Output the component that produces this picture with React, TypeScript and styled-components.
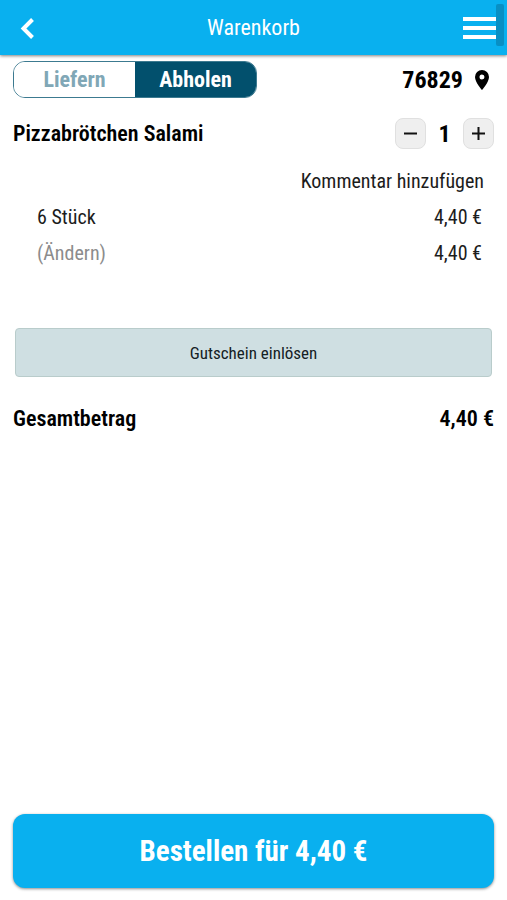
import React, { useState } from "react";
import styled, { createGlobalStyle } from "styled-components";

const GlobalStyle = createGlobalStyle`
  *, *::before, *::after { box-sizing: border-box; }
  body {
    margin: 0;
    background: #fff;
    color: #000;
    font-family: "Roboto Condensed", Roboto, sans-serif;
  }
  button, input { font-family: inherit; }
`;

const Page = styled.div`
  display: flex;
  flex-direction: column;
  min-height: 100vh;
`;

const Header = styled.header`
  position: relative;
  display: grid;
  grid-template-columns: 1fr auto 1fr;
  align-items: center;
  height: 55px;
  padding: 0 11px;
  background: #09b0ef;
  color: #fff;
  box-shadow: 0 1px 3px rgba(0, 0, 0, 0.5);
`;

const Title = styled.h1`
  margin: 0;
  font-size: 22px;
  line-height: 28px;
  font-weight: 400;
`;

const IconButton = styled.button<{ $end?: boolean }>`
  display: flex;
  justify-self: ${(p) => (p.$end ? "end" : "start")};
  padding: 0;
  border: 0;
  background: none;
  color: inherit;
  cursor: pointer;
`;

const ScrollThumb = styled.div`
  position: absolute;
  top: 4px;
  right: 3px;
  width: 8px;
  height: 42px;
  border-radius: 2px;
  background: #088fc4;
`;

const Main = styled.main`
  display: flex;
  flex-direction: column;
  flex: 1;
  padding: 6px 13px 0;
`;

const Row = styled.div`
  display: flex;
  align-items: center;
  justify-content: space-between;
`;

const ModeSwitch = styled.div`
  display: flex;
  width: 244px;
  height: 37px;
  overflow: hidden;
  border: 1px solid #3c7a90;
  border-radius: 12px;
`;

const ModeButton = styled.button<{ $active: boolean }>`
  flex: 1;
  padding: 0;
  border: 0;
  background: ${(p) => (p.$active ? "#02506d" : "#fff")};
  color: ${(p) => (p.$active ? "#fff" : "#80a7b6")};
  font-size: 22px;
  line-height: 36px;
  font-weight: 700;
  cursor: pointer;
`;

const Location = styled.button`
  display: flex;
  align-items: center;
  gap: 12px;
  padding: 0 5px 0 0;
  border: 0;
  background: none;
  color: #000;
  font-size: 24px;
  line-height: 36px;
  font-weight: 700;
  cursor: pointer;
`;

const ItemRow = styled(Row)`
  margin-top: 20px;
`;

const Strong = styled.h2`
  margin: 0;
  font-size: 22px;
  line-height: 28px;
  font-weight: 600;
`;

const Stepper = styled.div`
  display: flex;
  align-items: center;
`;

const StepButton = styled.button`
  display: flex;
  align-items: center;
  justify-content: center;
  width: 31px;
  height: 31px;
  padding: 0;
  border: 1px solid #e0e0e0;
  border-radius: 8px;
  background: #efefef;
  color: #111;
  cursor: pointer;
`;

const Count = styled.output`
  width: 37px;
  text-align: center;
  font-size: 24px;
  line-height: 28px;
  font-weight: 700;
`;

const Details = styled.div`
  display: flex;
  flex-direction: column;
  padding: 14px 12px 0 24px;
  color: #1c1c1c;
  font-size: 20px;
  line-height: 36px;
`;

const TextButton = styled.button<{ $muted?: boolean }>`
  padding: 0;
  border: 0;
  background: none;
  color: ${(p) => (p.$muted ? "#8c8c8c" : "inherit")};
  font-size: 20px;
  line-height: 36px;
  cursor: pointer;
`;

const CommentButton = styled(TextButton)`
  align-self: flex-end;
  margin-right: -2px;
`;

const VoucherButton = styled.button`
  height: 49px;
  margin: 57px 2px 0;
  border: 1px solid #b9cccb;
  border-radius: 4px;
  background: #cfdfe2;
  color: #142024;
  font-size: 17px;
  line-height: 24px;
  cursor: pointer;
`;

const TotalRow = styled(Row)`
  margin-top: 28px;
`;

const Footer = styled.footer`
  position: sticky;
  bottom: 0;
  display: flex;
  padding: 12px 13px;
`;

const OrderButton = styled.button`
  flex: 1;
  height: 74px;
  border: 0;
  border-radius: 12px;
  background: #09b0ef;
  color: #fff;
  font-size: 29px;
  line-height: 36px;
  font-weight: 700;
  box-shadow: 0 1px 3px rgba(0, 0, 0, 0.45);
  cursor: pointer;
`;

const BackIcon = () => (
  <svg width="32" height="32" viewBox="0 0 32 32" fill="none" stroke="currentColor" strokeWidth="4" aria-hidden="true">
    <path d="M21.500 7.500 12.500 16.500 21.500 25.500" />
  </svg>
);

const MenuIcon = () => (
  <svg width="33" height="23" viewBox="0 0 33 23" fill="currentColor" aria-hidden="true">
    <path d="M0 1h33v4H0zM0 10h33v4H0zM0 19h33v4H0z" />
  </svg>
);

const PinIcon = () => (
  <svg width="14" height="20" viewBox="0 0 14 20" fill="currentColor" aria-hidden="true">
    <path
      fillRule="evenodd"
      d="M7 0a7 7 0 0 0-7 7c0 5.200 7 13 7 13s7-7.800 7-13a7 7 0 0 0-7-7zm0 9.500a2.500 2.500 0 1 1 0-5 2.500 2.500 0 0 1 0 5z"
    />
  </svg>
);

const StepIcon = ({ plus }: { plus?: boolean }) => (
  <svg width="13" height="13" viewBox="0 0 13 13" stroke="currentColor" strokeWidth="2" aria-hidden="true">
    <path d={plus ? "M0 6.500h13M6.500 0v13" : "M0 6.500h13"} />
  </svg>
);

const UNIT_PRICE = 4.4;
const euro = (value: number) => `${value.toFixed(2).replace(".", ",")} €`;

export default function App() {
  const [pickup, setPickup] = useState(true);
  const [count, setCount] = useState(1);
  const total = euro(UNIT_PRICE * count);

  return (
    <Page>
      <GlobalStyle />
      <Header>
        <IconButton aria-label="Zurück">
          <BackIcon />
        </IconButton>
        <Title>Warenkorb</Title>
        <IconButton $end aria-label="Menü">
          <MenuIcon />
        </IconButton>
        <ScrollThumb />
      </Header>
      <Main>
        <Row>
          <ModeSwitch role="group" aria-label="Bestellart">
            <ModeButton $active={!pickup} aria-pressed={!pickup} onClick={() => setPickup(false)}>
              Liefern
            </ModeButton>
            <ModeButton $active={pickup} aria-pressed={pickup} onClick={() => setPickup(true)}>
              Abholen
            </ModeButton>
          </ModeSwitch>
          <Location>
            76829
            <PinIcon />
          </Location>
        </Row>
        <ItemRow>
          <Strong>Pizzabrötchen Salami</Strong>
          <Stepper>
            <StepButton aria-label="Weniger" onClick={() => setCount(Math.max(1, count - 1))}>
              <StepIcon />
            </StepButton>
            <Count>{count}</Count>
            <StepButton aria-label="Mehr" onClick={() => setCount(count + 1)}>
              <StepIcon plus />
            </StepButton>
          </Stepper>
        </ItemRow>
        <Details>
          <CommentButton>Kommentar hinzufügen</CommentButton>
          <Row>
            <span>6 Stück</span>
            <span>{euro(UNIT_PRICE)}</span>
          </Row>
          <Row>
            <TextButton $muted>(Ändern)</TextButton>
            <span>{total}</span>
          </Row>
        </Details>
        <VoucherButton>Gutschein einlösen</VoucherButton>
        <TotalRow>
          <Strong>Gesamtbetrag</Strong>
          <Strong as="span">{total}</Strong>
        </TotalRow>
      </Main>
      <Footer>
        <OrderButton>Bestellen für {total}</OrderButton>
      </Footer>
    </Page>
  );
}
